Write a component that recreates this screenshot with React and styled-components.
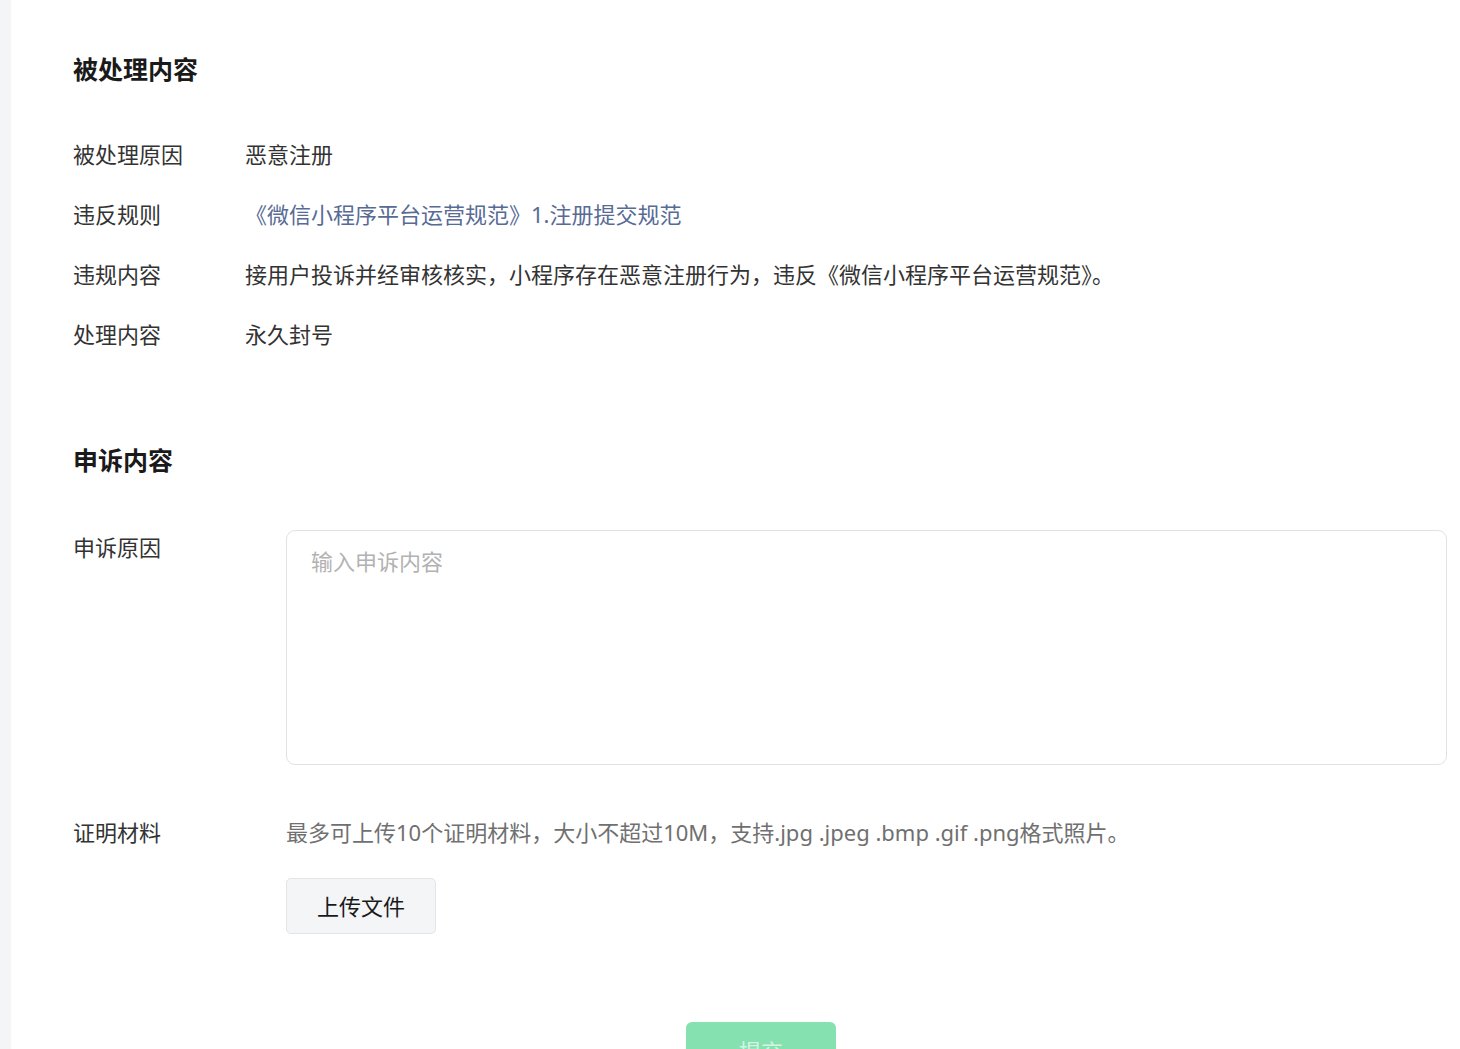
import React from 'react'
import styled, { createGlobalStyle } from 'styled-components'

const Global = createGlobalStyle`
  html, body {
    margin: 0;
    padding: 0;
    background: #f4f5f7;
    font-family: "Noto Sans", "Noto Sans CJK SC", sans-serif;
    color: #333;
  }
  * { box-sizing: border-box; }
`

const Page = styled.div`
  display: flex;
  min-height: 1100px;
  padding-left: 11px;
`

const Panel = styled.main`
  flex: 1;
  background: #fff;
  padding: 51px 13px 40px 62px;
`

const Title = styled.h2`
  margin: ${p => p.$top || 0}px 0 0;
  font-size: 25px;
  line-height: 34px;
  font-weight: 700;
  color: #1a1a1a;
  font-family: "Noto Sans CJK SC", sans-serif;
`

const InfoList = styled.dl`
  margin: 39px 0 0;
  display: grid;
  grid-template-columns: 172px 1fr;
`

const Label = styled.dt`
  margin: 0;
  font-size: 22px;
  line-height: 60px;
  color: #333;
`

const Value = styled.dd`
  margin: 0;
  font-size: 22px;
  line-height: 60px;
  color: ${p => (p.$link ? '#576b95' : '#333')};
`

const Form = styled.div`
  margin-top: 54px;
  display: grid;
  grid-template-columns: 213px 1fr;
  row-gap: 50px;
`

const FieldLabel = styled.div`
  font-size: 22px;
  line-height: 34px;
  color: #333;
`

const TextArea = styled.textarea`
  display: block;
  width: 100%;
  height: 235px;
  border: 1px solid #e2e2e2;
  border-radius: 9px;
  padding: 13px 24px;
  font-family: inherit;
  font-size: 22px;
  line-height: 34px;
  color: #333;
  resize: none;
  outline: none;
  &::placeholder { color: #b2b2b2; }
`

const Hint = styled.p`
  margin: 0;
  font-size: 22px;
  line-height: 34px;
  color: #707070;
`

const UploadButton = styled.button`
  margin-top: 29px;
  width: 150px;
  height: 56px;
  padding: 0 0 3px;
  border: 1px solid #e3e4e6;
  border-radius: 5px;
  background: #f4f5f7;
  font-family: inherit;
  font-size: 22px;
  color: #1a1a1a;
  cursor: pointer;
`

const Actions = styled.div`
  display: flex;
  justify-content: center;
  margin-top: 88px;
  padding-left: 2px;
`

const SubmitButton = styled.button`
  width: 150px;
  height: 56px;
  border: none;
  border-radius: 6px;
  background: #86e1b1;
  color: #d4f5e4;
  font-family: inherit;
  font-size: 22px;
`

const rows = [
  { label: '被处理原因', value: '恶意注册' },
  { label: '违反规则', value: '《微信小程序平台运营规范》1.注册提交规范', link: true },
  { label: '违规内容', value: '接用户投诉并经审核核实，小程序存在恶意注册行为，违反《微信小程序平台运营规范》。' },
  { label: '处理内容', value: '永久封号' },
]

export default function App() {
  return (
    <>
      <Global />
      <Page>
        <Panel>
          <Title>被处理内容</Title>
          <InfoList>
            {rows.map(r => (
              <React.Fragment key={r.label}>
                <Label>{r.label}</Label>
                <Value $link={r.link}>{r.value}</Value>
              </React.Fragment>
            ))}
          </InfoList>

          <Title $top={78}>申诉内容</Title>
          <Form>
            <FieldLabel>申诉原因</FieldLabel>
            <TextArea placeholder="输入申诉内容" />
            <FieldLabel>证明材料</FieldLabel>
            <div>
              <Hint>最多可上传10个证明材料，大小不超过10M，支持.jpg .jpeg .bmp .gif .png格式照片。</Hint>
              <UploadButton>上传文件</UploadButton>
            </div>
          </Form>
          <Actions>
            <SubmitButton disabled>提交</SubmitButton>
          </Actions>
        </Panel>
      </Page>
    </>
  )
}
